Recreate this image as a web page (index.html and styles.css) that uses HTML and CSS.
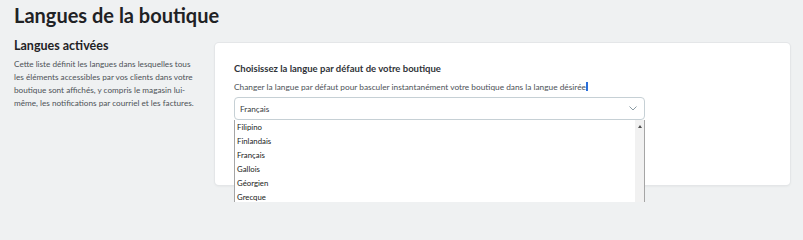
FILE: index.html
```html
<!DOCTYPE html>
<html lang="fr">
<head>
<meta charset="utf-8">
<title>Langues de la boutique</title>
<link rel="stylesheet" href="styles.css">
</head>
<body>
<div class="page">
  <h1 class="title">Langues de la boutique</h1>
  <div class="row">
    <div class="intro">
      <h2 class="intro-title">Langues activées</h2>
      <p class="intro-text">Cette liste définit les langues dans lesquelles tous les éléments accessibles par vos clients dans votre boutique sont affichés, y compris le magasin lui-même, les notifications par courriel et les factures.</p>
    </div>
    <div class="card">
      <h3 class="card-title">Choisissez la langue par défaut de votre boutique</h3>
      <p class="card-desc">Changer la langue par défaut pour basculer instantanément votre boutique dans la langue désirée<span class="caret"></span></p>
      <div class="select-wrap">
        <div class="select">
          <span>Français</span>
          <svg class="chev" width="8" height="5" viewBox="0 0 8 5"><path d="M0.5 0.5 L4 4 L7.5 0.5" fill="none" stroke="#8a9aa3" stroke-width="1"/></svg>
        </div>
        <div class="dropdown">
          <ul class="options">
            <li>Filipino</li>
            <li>Finlandais</li>
            <li>Français</li>
            <li>Gallois</li>
            <li>Géorgien</li>
            <li>Grecque</li>
          </ul>
          <div class="scrollbar"><span class="arrow-up"></span></div>
        </div>
      </div>
    </div>
  </div>
</div>
</body>
</html>
```

FILE: styles.css
```css
html, body {
  margin: 0;
  padding: 0;
  height: 202px;
  overflow: hidden;
  background: #eff1f2;
}
body {
  font-family: "Lato", "Noto Sans", sans-serif;
  color: #25282b;
}
.page {
  padding: 0 13px 0 14px;
}
.title {
  margin: 0;
  font-size: 20px;
  font-weight: 700;
  line-height: 30px;
  color: #1f2225;
}
.row {
  display: grid;
  grid-template-columns: 186px 1fr;
  column-gap: 15px;
  margin-top: 7px;
}
.intro-title {
  margin: 0;
  font-size: 12.5px;
  font-weight: 700;
  line-height: 18px;
  color: #1f2225;
}
.intro-text {
  margin: 3px 0 0;
  font-size: 8.2px;
  line-height: 13px;
  color: #4d5257;
}
.card {
  margin-top: 6px;
  height: 142px;
  box-sizing: border-box;
  background: #fff;
  border-radius: 4px;
  box-shadow: 0 0 0 1px #e4e6e8, 0 1px 3px rgba(0,0,0,0.08);
  padding: 19px 19px;
}
.card-title {
  margin: 0;
  font-size: 9.5px;
  font-weight: 700;
  line-height: 13px;
  color: #2f3338;
}
.card-desc {
  margin: 6px 0 0;
  font-size: 8.3px;
  line-height: 12px;
  color: #4d5257;
}
.caret {
  display: inline-block;
  width: 2px;
  height: 9px;
  background: #2a6fdb;
  vertical-align: -1px;
}
.select-wrap {
  position: relative;
  width: 411px;
  margin-top: 4px;
}
.select {
  height: 23px;
  box-sizing: border-box;
  border: 1px solid #c6d0d5;
  border-radius: 4px;
  display: flex;
  align-items: center;
  justify-content: space-between;
  padding: 0 7px 0 5px;
  font-size: 8.2px;
  color: #363a41;
}
.chev {
  display: block;
}
.dropdown {
  position: absolute;
  left: 0;
  top: 23px;
  width: 411px;
  height: 100px;
  box-sizing: border-box;
  background: #fff;
  border: 1px solid #a5a5a5;
  border-top: 0;
  display: flex;
}
.options {
  list-style: none;
  margin: 0;
  padding: 0;
  flex: 1;
}
.options li {
  height: 14px;
  line-height: 14px;
  padding-left: 2px;
  font-size: 7.8px;
  color: #1a1a1a;
}
.scrollbar {
  width: 9px;
  background: #f1f1f1;
  display: flex;
  justify-content: center;
  padding-top: 5px;
}
.arrow-up {
  width: 0;
  height: 0;
  border-left: 2.5px solid transparent;
  border-right: 2.5px solid transparent;
  border-bottom: 3px solid #505050;
}
```
